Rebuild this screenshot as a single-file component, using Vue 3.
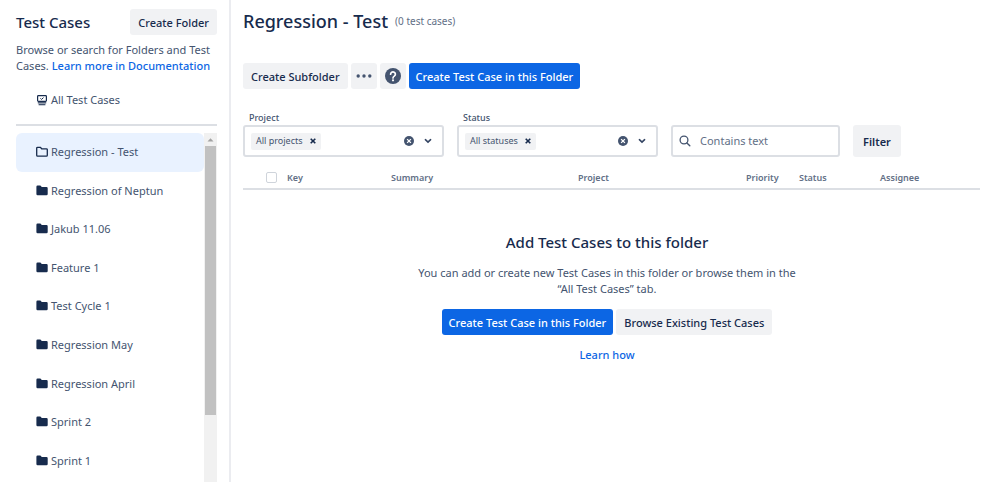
<template>
  <div class="layout">
    <aside class="sidebar">
      <div class="sidebar__header">
        <h2 class="sidebar__title">Test Cases</h2>
        <button type="button" class="btn">Create Folder</button>
      </div>
      <p class="sidebar__intro">
        Browse or search for Folders and Test Cases.
        <a href="#docs" class="link">Learn more in Documentation</a>
      </p>
      <a href="#all" class="sidebar__all">
        <svg width="10" height="11" viewBox="0 0 10 11" fill="none" stroke="#172b4d">
          <rect x="0.6" y="0.6" width="8.8" height="5.8" rx="0.8" stroke-width="1.2" />
          <path d="M3.4 3.4l1.1 1 2-1.8" stroke-width="1" />
          <path d="M0.8 7.8h8.4" stroke="#44546f" stroke-width="1.4" />
          <path d="M1.6 9.6h6.8" stroke="#44546f" stroke-width="1.4" />
        </svg>
        All Test Cases
      </a>

      <div class="folders">
        <nav class="folders__list" aria-label="Folders">
          <a
            v-for="folder in folders"
            :key="folder"
            href="#folder"
            :class="['folder', { 'folder--active': folder === activeFolder }]"
            @click.prevent="activeFolder = folder"
          >
            <svg width="12" height="12" viewBox="0 0 12 12">
              <path
                v-if="folder === activeFolder"
                d="M0.7 2.2a0.9 0.9 0 0 1 .9-.9h2.8l1.3 1.5h4.7a0.9 0.9 0 0 1 .9.9v5.6a0.9 0.9 0 0 1-.9.9H1.6a0.9 0.9 0 0 1-.9-.9z"
                fill="none"
                stroke="#172b4d"
                stroke-width="1.3"
              />
              <path
                v-else
                d="M0.4 1.8a1.2 1.2 0 0 1 1.2-1.2h2.8l1.4 1.5h4.7a1.2 1.2 0 0 1 1.2 1.2v5.8a1.2 1.2 0 0 1-1.2 1.2H1.6a1.2 1.2 0 0 1-1.2-1.2z"
                fill="#172b4d"
              />
            </svg>
            {{ folder }}
          </a>
        </nav>
        <div class="scrollbar" aria-hidden="true">
          <svg class="scrollbar__arrow" width="13" height="13" viewBox="0 0 13 13">
            <path d="M3.5 8.5l3-3.3 3 3.3z" fill="#a3a3a3" />
          </svg>
          <div class="scrollbar__thumb"></div>
        </div>
      </div>
    </aside>

    <main class="main">
      <header class="main__header">
        <h1 class="main__title">{{ activeFolder }}</h1>
        <span class="main__count">(0 test cases)</span>
      </header>

      <div class="toolbar">
        <button type="button" class="btn">Create Subfolder</button>
        <button type="button" class="btn btn--icon" aria-label="More actions">
          <svg width="16" height="4" viewBox="0 0 16 4" fill="#44546f">
            <circle cx="2.2" cy="2" r="1.7" />
            <circle cx="8" cy="2" r="1.7" />
            <circle cx="13.8" cy="2" r="1.7" />
          </svg>
        </button>
        <button type="button" class="btn btn--icon" aria-label="Help">
          <svg width="16" height="16" viewBox="0 0 16 16">
            <circle cx="8" cy="8" r="8" fill="#44546f" />
            <path
              d="M5.6 6.2a2.4 2.3 0 1 1 3.7 1.9c-.9.6-1.3.9-1.3 1.9"
              fill="none"
              stroke="#fff"
              stroke-width="1.7"
              stroke-linecap="round"
            />
            <circle cx="8" cy="12.3" r="1.1" fill="#fff" />
          </svg>
        </button>
        <button type="button" class="btn btn--primary">Create Test Case in this Folder</button>
      </div>

      <form class="filters" @submit.prevent>
        <div v-for="filter in filters" :key="filter.id" class="field">
          <label class="field__label" :for="filter.id">{{ filter.label }}</label>
          <div class="field__box">
            <span v-if="filter.tag" class="tag">
              {{ filter.tag }}
              <button type="button" class="plain" aria-label="Remove" @click="filter.tag = ''">
                <svg width="6" height="6" viewBox="0 0 6 6">
                  <path d="M0.7 0.7l4.6 4.6M5.3 0.7L0.7 5.3" stroke="#172b4d" stroke-width="1.6" />
                </svg>
              </button>
            </span>
            <select :id="filter.id" v-model="filter.tag" class="field__select">
              <option v-for="option in filter.options" :key="option">{{ option }}</option>
            </select>
            <button type="button" class="plain" aria-label="Clear" @click="filter.tag = ''">
              <svg width="10" height="10" viewBox="0 0 10 10">
                <circle cx="5" cy="5" r="5" fill="#44546f" />
                <path d="M3.1 3.1l3.8 3.8M6.9 3.1L3.1 6.9" stroke="#fff" stroke-width="1.3" />
              </svg>
            </button>
            <svg class="field__chevron" width="8" height="6" viewBox="0 0 8 6">
              <path
                d="M1.4 1.7L4 4.1l2.6-2.4"
                fill="none"
                stroke="#344563"
                stroke-width="1.6"
                stroke-linecap="round"
              />
            </svg>
          </div>
        </div>

        <div class="search">
          <svg width="12" height="12" viewBox="0 0 12 12" fill="none" stroke="#44546f">
            <circle cx="5" cy="5" r="3.9" stroke-width="1.3" />
            <path d="M7.9 7.9l2.9 2.9" stroke-width="1.4" stroke-linecap="round" />
          </svg>
          <input
            v-model="search"
            class="search__input"
            type="text"
            placeholder="Contains text"
            aria-label="Contains text"
          />
        </div>

        <button type="submit" class="btn btn--filter">Filter</button>
      </form>

      <table class="cases">
        <thead>
          <tr>
            <th class="cases__check">
              <input type="checkbox" class="checkbox" aria-label="Select all" />
            </th>
            <th class="cases__key">Key</th>
            <th>Summary</th>
            <th class="cases__project">Project</th>
            <th class="cases__priority">Priority</th>
            <th class="cases__status">Status</th>
            <th class="cases__assignee">Assignee</th>
          </tr>
        </thead>
      </table>

      <section class="empty">
        <h3 class="empty__title">Add Test Cases to this folder</h3>
        <p class="empty__text">
          You can add or create new Test Cases in this folder or browse them in the
          “All Test Cases” tab.
        </p>
        <div class="empty__actions">
          <button type="button" class="btn btn--primary">Create Test Case in this Folder</button>
          <button type="button" class="btn">Browse Existing Test Cases</button>
        </div>
        <a href="#help" class="link">Learn how</a>
      </section>
    </main>
  </div>
</template>

<script setup>
import { reactive, ref } from 'vue'

const folders = [
  'Regression - Test',
  'Regression of Neptun',
  'Jakub 11.06',
  'Feature 1',
  'Test Cycle 1',
  'Regression May',
  'Regression April',
  'Sprint 2',
  'Sprint 1'
]

const activeFolder = ref('Regression - Test')
const search = ref('')

const filters = reactive([
  { id: 'filter-project', label: 'Project', tag: 'All projects', options: ['All projects'] },
  { id: 'filter-status', label: 'Status', tag: 'All statuses', options: ['All statuses'] }
])
</script>

<style>
body {
  margin: 0;
  background: #fff;
}
</style>

<style scoped>
.layout {
  display: flex;
  height: 100vh;
  overflow: hidden;
  font-family: 'Segoe UI', 'Noto Sans', 'Open Sans', sans-serif;
  font-size: 11px;
  line-height: 16px;
  color: #44546f;
}

.layout *,
.layout *::before {
  box-sizing: border-box;
}

h1,
h2,
h3,
p {
  margin: 0;
}

svg {
  display: block;
  flex: none;
}

/* Shared controls */
.btn {
  display: flex;
  align-items: center;
  justify-content: center;
  flex: none;
  height: 26px;
  padding: 1px 8px 0;
  border: none;
  border-radius: 3px;
  background: #f1f2f4;
  font: inherit;
  font-weight: 500;
  color: #172b4d;
  white-space: nowrap;
  cursor: pointer;
}

.btn--icon {
  width: 26px;
  padding: 0;
}

.btn--primary {
  padding: 1px 7px 0;
  background: #0c66e4;
  color: #fff;
}

.btn--filter {
  width: 48px;
  height: 32px;
  font-weight: 600;
}

.plain {
  padding: 0;
  border: none;
  background: none;
  cursor: pointer;
}

.link {
  font-weight: 500;
  color: #0c66e4;
  text-decoration: none;
}

/* Sidebar */
.sidebar {
  display: flex;
  flex-direction: column;
  flex: none;
  width: 231px;
  padding: 9px 12px 0 16px;
  border-right: 2px solid #ebecf0;
}

.sidebar__header {
  display: flex;
  align-items: center;
  justify-content: space-between;
}

.sidebar__title {
  font-size: 15px;
  font-weight: 500;
  color: #172b4d;
}

.sidebar__intro {
  margin-top: 7px;
}

.sidebar__all {
  display: flex;
  align-items: center;
  gap: 4px;
  padding: 18px 0 16px 21px;
  border-bottom: 2px solid #dcdfe4;
  color: inherit;
  text-decoration: none;
}

.folders {
  display: flex;
  flex: 1;
  margin-top: 7px;
}

/* nine folders share the visible height */
.folders__list {
  display: grid;
  grid-template-rows: repeat(9, 1fr);
  flex: 1;
  padding-bottom: 2px;
}

.folder {
  display: flex;
  align-items: center;
  gap: 3px;
  padding-left: 20px;
  border-radius: 6px;
  color: inherit;
  text-decoration: none;
}

.folder--active {
  background: #e9f2ff;
}

.scrollbar {
  display: flex;
  flex-direction: column;
  width: 13px;
  background: #f1f1f1;
}

.scrollbar__thumb {
  height: 77%;
  margin: 0 1px;
  background: #c1c1c1;
}

/* Main area */
.main {
  flex: 1;
  min-width: 0;
  padding: 8px 19px 0 12px;
}

.main__header {
  display: flex;
  align-items: center;
  gap: 7px;
}

.main__title {
  font-size: 18px;
  line-height: 26px;
  font-weight: 500;
  color: #172b4d;
}

.main__count {
  font-size: 10px;
  color: #626f86;
}

.toolbar {
  display: flex;
  gap: 3px;
  margin-top: 29px;
}

.filters {
  display: flex;
  align-items: flex-end;
  gap: 13px;
  margin-top: 22px;
}

.field {
  flex: 0 1 201px;
}

.field__label {
  display: block;
  padding-left: 6px;
  font-size: 9px;
  line-height: 14px;
  font-weight: 500;
}

.field__box,
.search {
  display: flex;
  align-items: center;
  height: 32px;
  border: 2px solid #dcdfe4;
  border-radius: 3px;
}

.field__box {
  padding: 0 10px 0 6px;
}

.tag {
  display: flex;
  align-items: center;
  gap: 7px;
  height: 17px;
  padding: 0 5px;
  border-radius: 2px;
  background: #f1f2f4;
  font-size: 9px;
  white-space: nowrap;
}

.field__select {
  flex: 1;
  min-width: 0;
  height: 24px;
  border: none;
  background: none;
  color: transparent;
  appearance: none;
}

.field__chevron {
  margin-left: 10px;
}

.search {
  flex: 0 1 169px;
  min-width: 0;
  gap: 9px;
  padding: 0 6px;
}

.search__input {
  flex: 1;
  width: 100%;
  min-width: 0;
  padding: 0;
  border: none;
  outline: none;
  background: none;
  font: inherit;
  color: #172b4d;
}

.search__input::placeholder {
  color: #626f86;
}

.cases {
  width: 100%;
  margin-top: 10px;
  border-collapse: collapse;
  table-layout: fixed;
  border-bottom: 2px solid #dcdfe4;
  font-size: 9px;
}

.cases th {
  height: 22px;
  padding: 0;
  font-weight: 600;
  color: #626f86;
  text-align: left;
}

.cases .cases__check {
  width: 44px;
  padding-left: 23px;
}

.cases__key {
  width: 104px;
}

.cases__project {
  width: 168px;
}

.cases__priority {
  width: 53px;
}

.cases__status {
  width: 81px;
}

.cases__assignee {
  width: 100px;
}

.checkbox {
  display: block;
  width: 11px;
  height: 11px;
  margin: 0;
  border: 1px solid #cfd4db;
  border-radius: 2px;
  appearance: none;
}

/* Empty state */
.empty {
  display: flex;
  flex-direction: column;
  align-items: center;
  margin-top: 41px;
  padding-right: 9px;
  text-align: center;
}

.empty__title {
  font-size: 15px;
  line-height: 22px;
  font-weight: 500;
  color: #172b4d;
}

.empty__text {
  max-width: 390px;
  margin-top: 12px;
}

.empty__actions {
  display: flex;
  gap: 3px;
  margin: 12px 0;
}
</style>
